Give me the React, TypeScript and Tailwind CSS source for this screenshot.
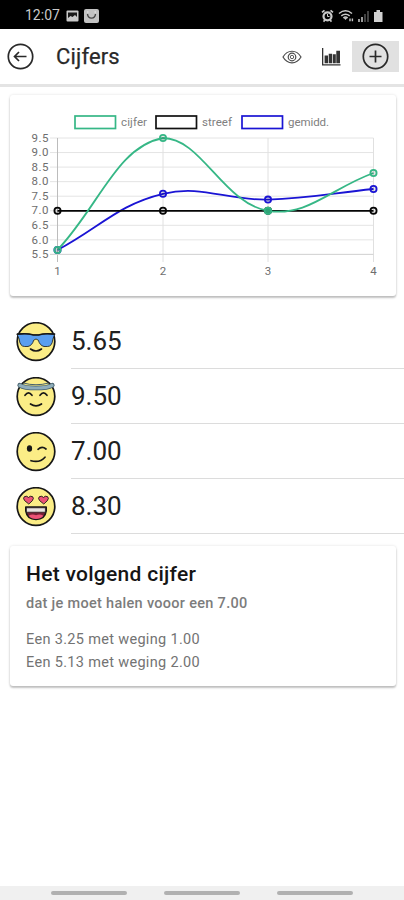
import React from "react";

const yTicks = ["9.5", "9.0", "8.5", "8.0", "7.5", "7.0", "6.5", "6.0", "5.5"];
const xTicks = [57.5, 163, 268, 373.5];

const legend = [
  { label: "cijfer", color: "#36b786", x: 75, tx: 121, w: 26 },
  { label: "streef", color: "#111111", x: 156, tx: 202, w: 30 },
  { label: "gemidd.", color: "#1a14d4", x: 242, tx: 288, w: 41 },
];

function Points({ ys, color }: { ys: number[]; color: string }) {
  return (
    <g fill="#00000018" stroke={color} strokeWidth="1.8">
      {ys.map((y, i) => (
        <circle key={i} cx={xTicks[i]} cy={y} r="3.1" />
      ))}
    </g>
  );
}

function Chart() {
  return (
    <svg className="block h-[201px] w-[386px]" viewBox="10 95 386 201" fontFamily="Roboto, sans-serif" fontSize="11.5" fill="#6e6e6e">
      {legend.map((l) => (
        <g key={l.label}>
          <rect x={l.x} y="116" width="40.5" height="12.5" fill="none" stroke={l.color} strokeWidth="1.7" />
          <text x={l.tx} y="125.5" textLength={l.w} fill="#808080">{l.label}</text>
        </g>
      ))}
      {yTicks.map((t, i) => (
        <g key={t}>
          <path d={`M50 ${138 + i * 14.55}H373.5`} stroke="#e4e4e4" />
          <text x="48.5" y={141.7 + i * 14.55} textAnchor="end" textLength="17">{t}</text>
        </g>
      ))}
      {xTicks.map((x, i) => (
        <g key={x}>
          <path d={`M${x} 138V262`} stroke={i === 0 ? "#bcbcbc" : "#e0e0e0"} />
          <text x={x} y="275" textAnchor="middle">{i + 1}</text>
        </g>
      ))}
      <path d="M50 254.4H373.5" stroke="#d4d4d4" />
      <g fill="none" strokeWidth="1.8">
        <path stroke="#1a14d4" d="M57.5 250C99.7 227.5 118.2 204.5 163 193.8C202.4 184.4 226 200.6 268 199.6C310 198.6 331.3 193.2 373.5 189" />
        <path stroke="#050505" d="M57.5 210.8H373.5" />
      </g>
      <Points ys={[250, 193.8, 199.6, 189]} color="#1a14d4" />
      <Points ys={[210.8, 210.8, 210.8, 210.8]} color="#050505" />
      <path fill="none" strokeWidth="1.8" stroke="#36b786" d="M57.5 250C99.7 205 117 146.6 163 138C201.3 138 223.1 203.3 268 210.8C307.3 217.3 331.3 188.1 373.5 173" />
      <Points ys={[250, 138, 210.8, 173]} color="#36b786" />
      <circle cx="268" cy="210.8" r="3.2" fill="#2fa377" stroke="#36b786" strokeWidth="1.2" />
    </svg>
  );
}

type Mood = "cool" | "halo" | "wink" | "love";

function Face({ mood }: { mood: Mood }) {
  return (
    <svg className="size-10 shrink-0" viewBox="0 0 40 40" fill="none" stroke="#171717" strokeLinecap="round" strokeLinejoin="round">
      <circle cx="20" cy="19.5" r="18.8" fill="#fbed86" strokeWidth="1.7" />
      {mood === "cool" && (
        <>
          <path d="M1.3 12Q11 11 17.5 12.8H22.5Q29 11 38.7 12L36.8 17.5Q36 24.5 31.5 24.5H28Q23.8 23.5 22.3 18.2Q20 15.8 17.7 18.2Q16.2 23.5 12 24.5H8.5Q4 24.5 3.2 17.5Z" fill="#5a9ff0" strokeWidth=".8" />
          <path d="M1.5 12.2Q11 11 17.5 13H22.5Q29 11 38.5 12.2" strokeWidth="1.7" />
          <path d="M14.5 27Q20 31 25.5 27" strokeWidth="1.6" />
        </>
      )}
      {mood === "halo" && (
        <>
          <path d="M3.7 8.2C10 12 30 12 36.3 8.2" stroke="#45606c" strokeWidth="4.6" />
          <path d="M3.8 8.4C10 12 30 12 36.2 8.4" stroke="#8fadba" strokeWidth="3" />
          <path d="M8 6.2Q20 9.4 32 6.2" stroke="#45606c" strokeWidth="1" />
          <path d="M9 18.3Q12.5 13.5 16 18.3M24 18.3Q27.5 13.5 31 18.3M14.5 27Q20 30.8 25.5 27" strokeWidth="1.7" />
        </>
      )}
      {mood === "wink" && (
        <>
          <ellipse cx="13.5" cy="16.5" rx="2.6" ry="3.3" fill="#171717" stroke="none" />
          <path d="M22 17.3Q26 13.8 30 17M15 28.7Q23.5 31.3 29 25.2" strokeWidth="1.7" />
        </>
      )}
      {mood === "love" && (
        <>
          <path d="M12.5 16.8L8.5 13.5Q6.6 11 8.5 9.6Q11 8.5 12.5 10.5Q14 8.5 16.5 9.6Q18.4 11 16.5 13.5ZM27.5 16.8L23.5 13.5Q21.6 11 23.5 9.6Q26 8.5 27.5 10.5Q29 8.5 31.5 9.6Q33.4 11 31.5 13.5Z" fill="#ec5276" strokeWidth=".9" />
          <path d="M9.8 20H30.2V24Q29 32.5 20 32.5Q11 32.5 9.8 24Z" fill="#742035" strokeWidth="1.6" />
          <path d="M10.6 20.8H29.4V25.2H10.6Z" fill="#e9e4e2" strokeWidth=".7" />
          <path d="M12.5 28.7Q16.5 26.3 20 28.3Q23.5 26.3 27.5 28.7Q24.5 31.9 20 31.9Q15.5 31.9 12.5 28.7Z" fill="#ec5276" stroke="none" />
        </>
      )}
    </svg>
  );
}

const grades: { mood: Mood; value: string }[] = [
  { mood: "cool", value: "5.65" },
  { mood: "halo", value: "9.50" },
  { mood: "wink", value: "7.00" },
  { mood: "love", value: "8.30" },
];

function StatusBar() {
  return (
    <div className="flex h-[29px] items-center bg-black pt-[2px] pr-[21px] pl-[25px] text-[#c9c9c9]">
      <span className="w-[35px] text-[14px] whitespace-nowrap">
        12:07
      </span>
      <svg className="ml-[6px] h-[12px] w-[13px]" viewBox="0 0 13 12">
        <rect x=".5" y=".5" width="12" height="11" rx="1" fill="#c9c9c9" />
        <path d="M2 2.5H11V7L9 5L6.5 7L4.5 6L2 8Z" fill="#191919" />
      </svg>
      <svg className="ml-[5px] h-[14px] w-[15px]" viewBox="0 0 15 14">
        <rect width="15" height="14" rx="2" fill="#c2c2c2" />
        <path d="M3.5 5C4 10.5 11 10.5 11.5 5" fill="none" stroke="#444" strokeWidth="1.4" />
        <path d="M3 3H4.5M10.5 3H12" stroke="#eee" />
      </svg>
      <svg className="ml-auto h-[14px] w-[62px]" viewBox="0 0 62 14" fill="none" stroke="#c9c9c9">
        <circle cx="6.5" cy="7.3" r="4" strokeWidth="2.2" />
        <path d="M1 3.4L3.5 1.3M9.5 1.3L12 3.4M2.5 12.6L4 11M10.5 12.6L9 11" strokeWidth="1.7" />
        <path d="M6.5 5V7.5H8.5" strokeWidth="1" />
        <path d="M18 4.5Q24.5-.8 31 4.5M20.3 6.8Q24.5 3.5 28.7 6.8M22.3 9Q24.5 7.2 26.7 9" strokeWidth="1.5" />
        <path d="M24.5 11L22.8 9.1Q24.5 8 26.2 9.1Z" fill="#c9c9c9" stroke="none" />
        <path d="M29 9.5V12.3M31.4 9.5V12.3" strokeWidth="1.4" />
        <path d="M38 10V13M41 8V13" stroke="#aaa" strokeWidth="1.8" />
        <path d="M44 5V13M47 2V13" stroke="#484848" strokeWidth="1.8" />
        <path d="M53 3H55.5V1H59V3H61.5V13H53Z" fill="#d1d1d1" stroke="none" />
      </svg>
    </div>
  );
}

function Header() {
  return (
    <header className="flex h-[58px] items-center border-b-[3px] border-[#e4e4e4] bg-white pl-[7px] text-[#292929]">
      <svg className="size-[27px]" viewBox="0 0 27 27" fill="none" stroke="currentColor" strokeWidth="1.7">
        <circle cx="13.5" cy="13.5" r="12.2" />
        <path d="M19.5 13.5H8M12 9L7.5 13.5L12 18" />
      </svg>
      <h1 className="ml-[22px] text-[22px] leading-none font-normal tracking-[0.15px] [-webkit-text-stroke:0.25px_#292929]">Cijfers</h1>
      <svg className="ml-auto h-[14px] w-[20px]" viewBox="0 0 20 14" fill="none" stroke="#4c4c4c" strokeWidth="1.2">
        <path d="M1 7C5.5-.7 14.5-.7 19 7C14.5 14.7 5.5 14.7 1 7Z" />
        <circle cx="10" cy="7" r="3.8" />
        <circle cx="10" cy="7" r="1.7" strokeWidth=".9" />
      </svg>
      <svg className="ml-5 h-[18px] w-[19px]" viewBox="0 0 19 18" fill="#333">
        <path d="M0 0H1.3V16.2H18.5V17.5H0ZM2.6 7.5H6V15.3H2.6ZM6.7 5.7H10.1V15.3H6.7ZM10.8 6.3H13.8V15.3H10.8ZM14.3 2.7H18V15.3H14.3Z" />
      </svg>
      <button className="mr-[5px] ml-[11px] flex h-[31px] w-[47px] items-center justify-center bg-[#e1e1e1]">
        <svg className="size-[27px]" viewBox="0 0 27 27" fill="none" stroke="#292929" strokeWidth="1.7">
          <circle cx="13.5" cy="13.5" r="12.2" />
          <path d="M7.5 13.5H19.5M13.5 7.5V19.5" />
        </svg>
      </button>
    </header>
  );
}

export default function App() {
  return (
    <div className="flex h-[900px] w-[404px] flex-col overflow-hidden bg-white font-[Roboto,sans-serif]">
      <StatusBar />
      <Header />
      <main className="flex-1 pt-2">
        <section className="mr-2 ml-[10px] rounded-[3px] bg-white shadow-[0_2px_2px_rgba(0,0,0,0.22),0_0_3px_rgba(0,0,0,0.12)]">
          <Chart />
        </section>
        <ul className="mt-[18px]">
          {grades.map((g) => (
            <li key={g.value} className="flex h-[55px] pl-4">
              <div className="pt-[7.5px]">
                <Face mood={g.mood} />
              </div>
              <div className="ml-[15px] flex flex-1 items-center border-b border-[#dcdcdc] pt-px text-[26px] text-[#202020]">
                {g.value}
              </div>
            </li>
          ))}
        </ul>
        <section className="mt-[12px] mr-2 ml-[10px] h-[140px] rounded-[3px] bg-white px-4 pt-[16px] shadow-[0_2px_2px_rgba(0,0,0,0.22),0_0_3px_rgba(0,0,0,0.12)]">
          <h2 className="text-[21px] leading-[24px] font-medium tracking-[0.28px] text-[#151515]">Het volgend cijfer</h2>
          <h3 className="mt-[8px] text-[14.5px] leading-[20px] font-medium tracking-[0.3px] text-[#7c7c7c]">dat je moet halen vooor een 7.00</h3>
          <div className="mt-[14px] text-[14.5px] leading-[23px] tracking-[0.32px] text-[#737373]">
            <p>Een 3.25 met weging 1.00</p>
            <p>Een 5.13 met weging 2.00</p>
          </div>
        </section>
      </main>
      <footer className="flex h-[14px] items-center justify-center gap-[37px] bg-[#f0f0f0]">
        <span className="h-[3.5px] w-[76px] rounded-full bg-[#b1b1b1]" />
        <span className="h-[3.5px] w-[76px] rounded-full bg-[#b1b1b1]" />
        <span className="h-[3.5px] w-[76px] rounded-full bg-[#b1b1b1]" />
      </footer>
    </div>
  );
}
